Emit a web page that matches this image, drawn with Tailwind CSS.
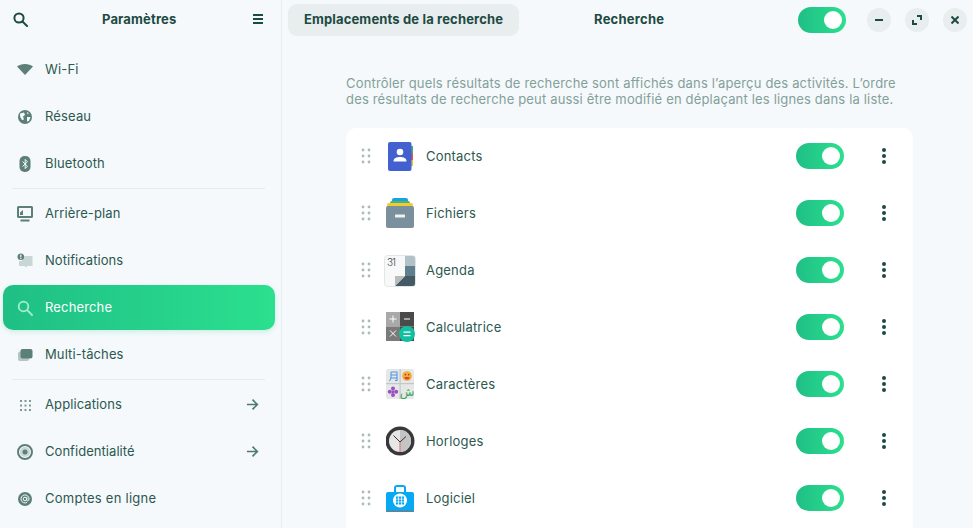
<!DOCTYPE html>
<html lang="fr">
<head>
  <meta charset="UTF-8"/>
  <title>Paramètres</title>
  <script src="https://cdn.jsdelivr.net/npm/@tailwindcss/browser@4"></script>
</head>
<body class="bg-[#f5f9fb] text-[#1f4f47] font-['Inter',sans-serif] text-[13px] overflow-hidden">
<div class="flex w-[973px] h-[528px] overflow-hidden">

  <!-- Sidebar -->
  <aside class="w-[282px] shrink-0 border-r border-[#e8edef] text-[#2c5850]">
    <header class="h-[46px] pb-[8px] flex items-center pl-[13px]">
      <svg class="w-[15px] h-[15px] shrink-0" viewBox="0 0 15 15" fill="none" stroke="#1d4a42" stroke-width="2"><circle cx="6" cy="6" r="4.600"/><path d="M9.500 9.500 L14 14" stroke-linecap="round"/></svg>
      <span class="ml-[74px] w-[76px] font-bold text-[#1d4a42] tracking-[0.15px] translate-y-[0.5px]">Paramètres</span>
      <svg class="ml-[75px] w-[10px] h-[10px] shrink-0" viewBox="0 0 10 10" fill="#1d4a42"><rect y="0" width="10" height="2"/><rect y="4" width="10" height="2"/><rect y="8" width="10" height="2"/></svg>
    </header>
    <nav>
      <a class="h-[47px] flex items-center pl-[17px] gap-[12px]">
        <svg class="w-4 h-4" viewBox="0 0 16 16" fill="#5c7f77"><path d="M0 4.500C2 2.900 4.800 2 8 2s6 .9 8 2.500L8 13z"/></svg>
        <span class="tracking-[0.15px]">Wi-Fi</span>
      </a>
      <a class="h-[47px] flex items-center pl-[17px] gap-[12px]">
        <svg class="w-4 h-4" viewBox="0 0 16 16"><circle cx="8" cy="8" r="7" fill="#5c7f77"/><path d="M3 4.500 L7 3.500 L8 6 L6 7.500 L7 10.500 L5 11 L3.200 8z M10 8 L13.500 8 L12 12 L10 12.500z M10 3 L12 4.200 L10.500 5.200z" fill="#f5f9fb"/></svg>
        <span class="tracking-[0.15px]">Réseau</span>
      </a>
      <a class="h-[47px] flex items-center pl-[17px] gap-[12px]">
        <svg class="w-4 h-4" viewBox="0 0 16 16"><rect x="2.500" y="0" width="11" height="16" rx="5" fill="#5c7f77"/><path d="M5.500 5.500 L10.500 10.200 L8.200 12.600 V3.400 L10.500 5.800 L5.500 10.500" fill="none" stroke="#f5f9fb" stroke-width="1"/></svg>
        <span class="tracking-[0.15px]">Bluetooth</span>
      </a>
      <div class="h-px my-px ml-3 mr-4 bg-[#e6ebed]"></div>
      <a class="h-[47px] flex items-center pl-[17px] gap-[12px]">
        <svg class="w-4 h-4" viewBox="0 0 16 16"><path fill-rule="evenodd" d="M1.500 0h13A1.500 1.500 0 0 1 16 1.500v9a1.500 1.500 0 0 1-1.500 1.500h-13A1.500 1.500 0 0 1 0 10.500v-9A1.500 1.500 0 0 1 1.500 0zM2 2v8h12V2z" fill="#5c7f77"/><path d="M3 9V6.500L6 4v5z" fill="#5c7f77"/><rect x="3.500" y="13.500" width="9" height="2" fill="#5c7f77"/></svg>
        <span class="tracking-[0.1px]">Arrière-plan</span>
      </a>
      <a class="h-[47px] flex items-center pl-[17px] gap-[12px]">
        <svg class="w-4 h-4" viewBox="0 0 16 16"><path d="M5 3h10.500v10h-5l-1.500 1.500L7.500 13H2V8h3z" fill="#c9d6d3"/><circle cx="3.800" cy="3.800" r="3.300" fill="#5c7f77"/><rect x="3.200" y="1.600" width="1.200" height="2.800" fill="#f5f9fb"/><rect x="3.200" y="5" width="1.200" height="1.100" fill="#f5f9fb"/></svg>
        <span class="tracking-[0.05px]">Notifications</span>
      </a>
      <a class="h-[45px] my-px ml-[3px] mr-[6px] flex items-center pl-[14px] gap-[12px] rounded-[10px] bg-gradient-to-r from-[#1fbf85] to-[#2be08f] text-white shadow-[0_2px_5px_rgba(30,190,130,0.18)]">
        <svg class="w-4 h-4" viewBox="0 0 16 16" fill="none" stroke="#a5eecf" stroke-width="1.800"><circle cx="6.500" cy="6.500" r="4.800"/><path d="M10.200 10.200 L15 15" stroke-linecap="round"/></svg>
        <span class="tracking-[0.15px]">Recherche</span>
      </a>
      <a class="h-[47px] flex items-center pl-[17px] gap-[12px]">
        <svg class="w-4 h-4" viewBox="0 0 16 16"><rect x="1" y="4.500" width="11" height="9.500" rx="2" fill="#b4c6c2"/><rect x="3.500" y="2" width="12" height="9.500" rx="2" fill="#5c7f77"/></svg>
        <span class="tracking-[0.1px]">Multi-tâches</span>
      </a>
      <div class="h-px my-px ml-3 mr-4 bg-[#e6ebed]"></div>
      <a class="h-[47px] flex items-center pl-[17px] gap-[12px]">
        <svg class="w-4 h-4" viewBox="0 0 16 16" fill="#7d9a94"><rect x="3" y="3" width="2" height="2"/><rect x="7.500" y="3" width="2" height="2"/><rect x="12" y="3" width="2" height="2"/><rect x="3" y="7.500" width="2" height="2"/><rect x="7.500" y="7.500" width="2" height="2"/><rect x="12" y="7.500" width="2" height="2"/><rect x="3" y="12" width="2" height="2"/><rect x="7.500" y="12" width="2" height="2"/><rect x="12" y="12" width="2" height="2"/></svg>
        <span class="tracking-[0.1px] flex-1">Applications</span>
        <svg class="w-[13px] h-[13px] mr-[22px]" viewBox="0 0 14 14" fill="none" stroke="#4f7a70" stroke-width="1.800"><path d="M1 7h11M7 1.800 12.200 7 7 12.200"/></svg>
      </a>
      <a class="h-[47px] flex items-center pl-[17px] gap-[12px]">
        <svg class="w-4 h-4" viewBox="0 0 16 16" fill="none"><circle cx="8" cy="8" r="7" stroke="#5c7f77" stroke-width="2"/><circle cx="8" cy="8" r="5" fill="#c9d6d3"/><circle cx="8" cy="8" r="2.500" fill="#5c7f77"/></svg>
        <span class="tracking-[0.05px] flex-1">Confidentialité</span>
        <svg class="w-[13px] h-[13px] mr-[22px]" viewBox="0 0 14 14" fill="none" stroke="#4f7a70" stroke-width="1.800"><path d="M1 7h11M7 1.800 12.200 7 7 12.200"/></svg>
      </a>
      <a class="h-[47px] flex items-center pl-[17px] gap-[12px]">
        <svg class="w-4 h-4" viewBox="0 0 16 16" fill="none"><circle cx="8" cy="8" r="7" fill="#5c7f77"/><circle cx="8" cy="8" r="1.800" stroke="#f5f9fb" stroke-width="1"/><path d="M9.800 6.200V9c0 1.200 2.200 1.200 2.200-1a4 4 0 1 0-2 3.400" stroke="#f5f9fb" stroke-width="1"/></svg>
        <span class="tracking-[0.25px]">Comptes en ligne</span>
      </a>
    </nav>
  </aside>

  <!-- Main -->
  <main class="flex-1 min-w-0">
    <header class="h-[40px] flex items-center pl-[6px]">
      <button class="h-8 w-[231px] shrink-0 rounded-[9px] bg-[#e8edee] font-bold text-[#1d4a42] tracking-[0.15px] whitespace-nowrap">Emplacements de la recherche</button>
      <span class="ml-[75px] w-[70px] shrink-0 -translate-y-[0.5px] font-bold text-[#1d4a42] tracking-[0.25px]">Recherche</span>
      <div class="ml-[134px] w-12 h-[26px] rounded-full bg-gradient-to-r from-[#1fbf85] to-[#2be08f] flex items-center justify-end pr-[4px] shrink-0">
        <span class="w-[18px] h-[18px] rounded-full bg-white"></span>
      </div>
      <div class="ml-[21px] flex gap-[14px]">
        <span class="w-6 h-6 rounded-full bg-[#e8edee] flex items-center justify-center">
          <svg class="w-2 h-2" viewBox="0 0 8 8" fill="#1d4a42"><rect y="3" width="8" height="2"/></svg>
        </span>
        <span class="w-6 h-6 rounded-full bg-[#e8edee] flex items-center justify-center">
          <svg class="w-[10px] h-[10px]" viewBox="0 0 10 10" fill="none" stroke="#1d4a42" stroke-width="2"><path d="M5 1h4v4M1 5v4h4"/></svg>
        </span>
        <span class="w-6 h-6 rounded-full bg-[#e8edee] flex items-center justify-center">
          <svg class="w-2 h-2" viewBox="0 0 8 8" fill="none" stroke="#1d4a42" stroke-width="2"><path d="M.5.5l7 7M7.500.5l-7 7"/></svg>
        </span>
      </div>
    </header>

    <section class="ml-[64px] w-[567px] pt-[35px]">
      <p class="text-[#83a09a] leading-[16px] tracking-[0.17px] mb-[21px] whitespace-nowrap">Contrôler quels résultats de recherche sont affichés dans l’aperçu des activités. L’ordre<br/>des résultats de recherche peut aussi être modifié en déplaçant les lignes dans la liste.</p>

      <div class="bg-white rounded-[10px] pb-[57px]">
        <!-- Contacts -->
        <div class="h-[57px] pb-px flex items-center">
          <svg class="w-[10px] h-[16px] mx-[15px]" viewBox="0 0 10 16" fill="#a9bcb8"><circle cx="2" cy="2" r="1.400"/><circle cx="8" cy="2" r="1.400"/><circle cx="2" cy="8" r="1.400"/><circle cx="8" cy="8" r="1.400"/><circle cx="2" cy="14" r="1.400"/><circle cx="8" cy="14" r="1.400"/></svg>
          <svg class="w-7 h-[30px] mr-3" viewBox="0 0 28 30"><rect x="22" y="5" width="5" height="7" fill="#4caf7a"/><rect x="22" y="12" width="5" height="7" fill="#e0574f"/><rect x="22" y="19" width="5" height="6" fill="#f0c030"/><rect x="2" y="1" width="23.500" height="29" rx="2" fill="#4260cf"/><circle cx="14" cy="11" r="3.300" fill="#fff"/><path d="M7.500 20.500c0-3.500 3-4.500 6.500-4.500s6.500 1 6.500 4.500z" fill="#fff"/></svg>
          <span class="flex-1 translate-y-px tracking-[0.2px] text-[#2c5850]">Contacts</span>
          <div class="w-12 h-[26px] rounded-full bg-gradient-to-r from-[#1fbf85] to-[#2be08f] flex items-center justify-end pr-[4px]"><span class="w-[18px] h-[18px] rounded-full bg-white"></span></div>
          <svg class="w-[4px] h-[16px] ml-[38px] mr-[27px]" viewBox="0 0 4 16" fill="#1d4a42"><circle cx="2" cy="2" r="2"/><circle cx="2" cy="8" r="2"/><circle cx="2" cy="14" r="2"/></svg>
        </div>
        <!-- Fichiers -->
        <div class="h-[57px] pb-px flex items-center">
          <svg class="w-[10px] h-[16px] mx-[15px]" viewBox="0 0 10 16" fill="#a9bcb8"><circle cx="2" cy="2" r="1.400"/><circle cx="8" cy="2" r="1.400"/><circle cx="2" cy="8" r="1.400"/><circle cx="8" cy="8" r="1.400"/><circle cx="2" cy="14" r="1.400"/><circle cx="8" cy="14" r="1.400"/></svg>
          <svg class="w-7 h-[30px] mr-3" viewBox="0 0 28 30"><path d="M6 2a2 2 0 0 1 2-2h12a2 2 0 0 1 2 2v4H6z" fill="#1e9fe0"/><path d="M4 5a2 2 0 0 1 2-2h16a2 2 0 0 1 2 2v4H4z" fill="#3fb983"/><path d="M1 7a2 2 0 0 1 2-2h22a2 2 0 0 1 2 2v4H1z" fill="#f7c92d"/><rect x="0" y="8" width="28" height="22" rx="2" fill="#7a909c"/><rect x="9" y="16.500" width="10" height="3" rx=".5" fill="#eef2f3"/></svg>
          <span class="flex-1 translate-y-px tracking-[0.2px] text-[#2c5850]">Fichiers</span>
          <div class="w-12 h-[26px] rounded-full bg-gradient-to-r from-[#1fbf85] to-[#2be08f] flex items-center justify-end pr-[4px]"><span class="w-[18px] h-[18px] rounded-full bg-white"></span></div>
          <svg class="w-[4px] h-[16px] ml-[38px] mr-[27px]" viewBox="0 0 4 16" fill="#1d4a42"><circle cx="2" cy="2" r="2"/><circle cx="2" cy="8" r="2"/><circle cx="2" cy="14" r="2"/></svg>
        </div>
        <!-- Agenda -->
        <div class="h-[57px] pb-px flex items-center">
          <svg class="w-[10px] h-[16px] mx-[15px]" viewBox="0 0 10 16" fill="#a9bcb8"><circle cx="2" cy="2" r="1.400"/><circle cx="8" cy="2" r="1.400"/><circle cx="2" cy="8" r="1.400"/><circle cx="8" cy="8" r="1.400"/><circle cx="2" cy="14" r="1.400"/><circle cx="8" cy="14" r="1.400"/></svg>
          <span class="relative w-7 h-7 mr-3 shrink-0">
            <svg class="absolute -left-[2px] -top-[1px] w-[32px] h-[32px]" viewBox="0 0 32 32"><rect x="0.500" y="0.500" width="31" height="31" rx="3" fill="#f7f8f8" stroke="#e2e6e7"/><path d="M21 1h8a2 2 0 0 1 2 2v8H21z" fill="#b0c1c8"/><rect x="21" y="11" width="10" height="10" fill="#5f7f8c"/><path d="M31 21v8a2 2 0 0 1-2 2H11l10-10z" fill="#455a64"/><path d="M11 31V21h10z" fill="#b9bcbc"/></svg>
            <span class="absolute left-[1px] top-0 text-[10px] leading-[12px] tracking-[-1px] font-light text-[#3a4a50]">31</span>
          </span>
          <span class="flex-1 translate-y-px tracking-[0.2px] text-[#2c5850]">Agenda</span>
          <div class="w-12 h-[26px] rounded-full bg-gradient-to-r from-[#1fbf85] to-[#2be08f] flex items-center justify-end pr-[4px]"><span class="w-[18px] h-[18px] rounded-full bg-white"></span></div>
          <svg class="w-[4px] h-[16px] ml-[38px] mr-[27px]" viewBox="0 0 4 16" fill="#1d4a42"><circle cx="2" cy="2" r="2"/><circle cx="2" cy="8" r="2"/><circle cx="2" cy="14" r="2"/></svg>
        </div>
        <!-- Calculatrice -->
        <div class="h-[57px] pb-px flex items-center">
          <svg class="w-[10px] h-[16px] mx-[15px]" viewBox="0 0 10 16" fill="#a9bcb8"><circle cx="2" cy="2" r="1.400"/><circle cx="8" cy="2" r="1.400"/><circle cx="2" cy="8" r="1.400"/><circle cx="8" cy="8" r="1.400"/><circle cx="2" cy="14" r="1.400"/><circle cx="8" cy="14" r="1.400"/></svg>
          <svg class="w-[30px] h-[30px] mr-[10px]" viewBox="0 0 30 30"><rect x="0" y="0" width="14" height="14.500" fill="#a9a9a9"/><rect x="14" y="0" width="14" height="14.500" fill="#4a4a4a"/><rect x="0" y="14.500" width="14" height="14.500" fill="#7a7a7a"/><rect x="14" y="14.500" width="14" height="14.500" fill="#4a4a4a"/><path d="M3.500 7h7M7 3.500v7M18 7h6M4 18.500l6 6M10 18.500l-6 6" stroke="#fff" stroke-width="1"/><circle cx="21" cy="22" r="8" fill="#12bfa0"/><path d="M17.500 20.200h7M17.500 23.600h7" stroke="#fff" stroke-width="1.200"/></svg>
          <span class="flex-1 translate-y-px tracking-[0.2px] text-[#2c5850]">Calculatrice</span>
          <div class="w-12 h-[26px] rounded-full bg-gradient-to-r from-[#1fbf85] to-[#2be08f] flex items-center justify-end pr-[4px]"><span class="w-[18px] h-[18px] rounded-full bg-white"></span></div>
          <svg class="w-[4px] h-[16px] ml-[38px] mr-[27px]" viewBox="0 0 4 16" fill="#1d4a42"><circle cx="2" cy="2" r="2"/><circle cx="2" cy="8" r="2"/><circle cx="2" cy="14" r="2"/></svg>
        </div>
        <!-- Caractères -->
        <div class="h-[57px] pb-px flex items-center">
          <svg class="w-[10px] h-[16px] mx-[15px]" viewBox="0 0 10 16" fill="#a9bcb8"><circle cx="2" cy="2" r="1.400"/><circle cx="8" cy="2" r="1.400"/><circle cx="2" cy="8" r="1.400"/><circle cx="8" cy="8" r="1.400"/><circle cx="2" cy="14" r="1.400"/><circle cx="8" cy="14" r="1.400"/></svg>
          <svg class="w-[30px] h-[30px] mr-[10px]" viewBox="0 0 30 30"><rect width="28" height="30" rx="2" fill="#e6e8e8"/><rect x="13.500" y="0" width="1.200" height="30" fill="#c2c8c8"/><rect x="0" y="14" width="28" height="1.200" fill="#c2c8c8"/><path d="M5 3h6v8.500H9M5 3v5c0 2-.5 3-1.500 4M5 6h6M5 9h6" fill="none" stroke="#5294e2" stroke-width="1.100"/><circle cx="21" cy="7" r="4.800" fill="#f7a93b"/><path d="M18.500 8h5a2.500 2.500 0 0 1-5 0z" fill="#d9432f"/><rect x="18.800" y="5" width="1.300" height="1.300" fill="#7a4a12"/><rect x="22" y="5" width="1.300" height="1.300" fill="#7a4a12"/><g fill="#9b4fc0"><circle cx="7" cy="19.500" r="2"/><circle cx="7" cy="26" r="2"/><circle cx="3.800" cy="22.700" r="2"/><circle cx="10.200" cy="22.700" r="2"/><circle cx="7" cy="22.700" r="1.500"/></g><text x="21" y="27" text-anchor="middle" font-size="12" fill="#3fa65f" font-family="DejaVu Sans, sans-serif">ش</text></svg>
          <span class="flex-1 translate-y-px tracking-[0.2px] text-[#2c5850]">Caractères</span>
          <div class="w-12 h-[26px] rounded-full bg-gradient-to-r from-[#1fbf85] to-[#2be08f] flex items-center justify-end pr-[4px]"><span class="w-[18px] h-[18px] rounded-full bg-white"></span></div>
          <svg class="w-[4px] h-[16px] ml-[38px] mr-[27px]" viewBox="0 0 4 16" fill="#1d4a42"><circle cx="2" cy="2" r="2"/><circle cx="2" cy="8" r="2"/><circle cx="2" cy="14" r="2"/></svg>
        </div>
        <!-- Horloges -->
        <div class="h-[57px] pb-px flex items-center">
          <svg class="w-[10px] h-[16px] mx-[15px]" viewBox="0 0 10 16" fill="#a9bcb8"><circle cx="2" cy="2" r="1.400"/><circle cx="8" cy="2" r="1.400"/><circle cx="2" cy="8" r="1.400"/><circle cx="8" cy="8" r="1.400"/><circle cx="2" cy="14" r="1.400"/><circle cx="8" cy="14" r="1.400"/></svg>
          <svg class="w-[30px] h-[30px] mr-[10px]" viewBox="0 0 30 30"><circle cx="14" cy="15" r="14.500" fill="#383838"/><circle cx="14" cy="15" r="11" fill="#e6e6e6"/><path d="M14 4A11 11 0 0 1 14 26z" fill="#c4c4c4"/><path d="M14 16 L7.500 9.500M14 16 L20 10.500" stroke="#333" stroke-width="1"/><path d="M14 16v10" stroke="#e08a80" stroke-width="1.400"/></svg>
          <span class="flex-1 translate-y-px tracking-[0.2px] text-[#2c5850]">Horloges</span>
          <div class="w-12 h-[26px] rounded-full bg-gradient-to-r from-[#1fbf85] to-[#2be08f] flex items-center justify-end pr-[4px]"><span class="w-[18px] h-[18px] rounded-full bg-white"></span></div>
          <svg class="w-[4px] h-[16px] ml-[38px] mr-[27px]" viewBox="0 0 4 16" fill="#1d4a42"><circle cx="2" cy="2" r="2"/><circle cx="2" cy="8" r="2"/><circle cx="2" cy="14" r="2"/></svg>
        </div>
        <!-- Logiciel -->
        <div class="h-[57px] pb-px flex items-center">
          <svg class="w-[10px] h-[16px] mx-[15px]" viewBox="0 0 10 16" fill="#a9bcb8"><circle cx="2" cy="2" r="1.400"/><circle cx="8" cy="2" r="1.400"/><circle cx="2" cy="8" r="1.400"/><circle cx="8" cy="8" r="1.400"/><circle cx="2" cy="14" r="1.400"/><circle cx="8" cy="14" r="1.400"/></svg>
          <svg class="w-[30px] h-[30px] mr-[10px]" viewBox="0 0 30 30"><path d="M9 10V5a2 2 0 0 1 2-2h6a2 2 0 0 1 2 2v5" fill="none" stroke="#07a9f4" stroke-width="2"/><path d="M0 11a2 2 0 0 1 2-2h24a2 2 0 0 1 2 2v18H0z" fill="#07a9f4"/><rect y="27.500" width="28" height="1.500" fill="#67828f"/><circle cx="14" cy="17.500" r="7" fill="#fff"/><g fill="#07a9f4"><rect x="10" y="13.500" width="2.200" height="2.200"/><rect x="12.900" y="13.500" width="2.200" height="2.200"/><rect x="15.800" y="13.500" width="2.200" height="2.200"/><rect x="10" y="16.400" width="2.200" height="2.200"/><rect x="12.900" y="16.400" width="2.200" height="2.200"/><rect x="15.800" y="16.400" width="2.200" height="2.200"/><rect x="10" y="19.300" width="2.200" height="2.200"/><rect x="12.900" y="19.300" width="2.200" height="2.200"/><rect x="15.800" y="19.300" width="2.200" height="2.200"/></g></svg>
          <span class="flex-1 translate-y-px tracking-[0.2px] text-[#2c5850]">Logiciel</span>
          <div class="w-12 h-[26px] rounded-full bg-gradient-to-r from-[#1fbf85] to-[#2be08f] flex items-center justify-end pr-[4px]"><span class="w-[18px] h-[18px] rounded-full bg-white"></span></div>
          <svg class="w-[4px] h-[16px] ml-[38px] mr-[27px]" viewBox="0 0 4 16" fill="#1d4a42"><circle cx="2" cy="2" r="2"/><circle cx="2" cy="8" r="2"/><circle cx="2" cy="14" r="2"/></svg>
        </div>
      </div>
    </section>
  </main>
</div>
</body>
</html>
